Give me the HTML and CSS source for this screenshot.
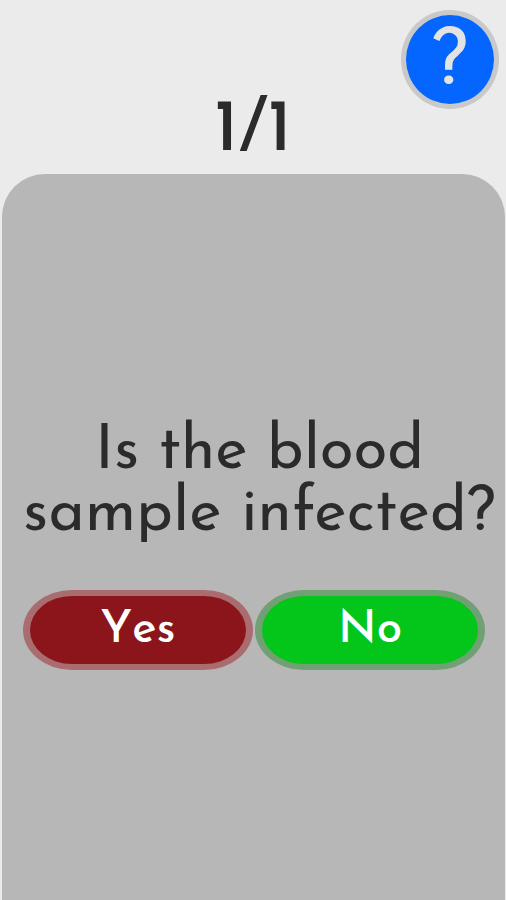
FILE: index.html
```
<!DOCTYPE html>
<html lang="en">
<head>
  <meta charset="UTF-8">
  <meta name="viewport" content="width=device-width, initial-scale=1.0">
  <title>Blood sample</title>
  <link rel="stylesheet" href="styles.css">
</head>
<body>
  <div class="screen">
    <header class="top">
      <div class="counter">1/1</div>
      <button class="help" aria-label="Help"><span>?</span></button>
    </header>

    <main class="card">
      <h1 class="question">
        <span class="line first">Is the blood</span>
        <span class="line second">sample infected?</span>
      </h1>
      <div class="answers">
        <button class="answer yes"><span>Yes</span></button>
        <button class="answer no"><span>No</span></button>
      </div>
    </main>
  </div>
</body>
</html>
```
FILE: styles.css
```
* {
  box-sizing: border-box;
  margin: 0;
  padding: 0;
}
body {
  background-color: #ebebeb;
  color: #2b2b2b;
  font-family: "Josefin Sans", Lato, sans-serif;
}
.screen {
  display: flex;
  flex-direction: column;
  height: 900px;
  overflow: hidden;
}

/* counter and help button */
.top {
  position: relative;
  height: 174px;
  padding-top: 92px;
}
.counter {
  font-size: 74px;
  font-weight: 500;
  line-height: 80px;
  text-align: center;
}
.help {
  position: absolute;
  top: 10px;
  right: 7px;
  width: 98px;
  height: 99px;
  padding-top: 10px;
  border: 5px solid #c9c9c9;
  border-radius: 50%;
  background: #0566ff;
  color: #e3e3e3;
  font-family: inherit;
  font-size: 78px;
  line-height: 80px;
}

/* question card */
.card {
  flex: 1;
  margin: 0 1px 0 2px;
  padding-top: 248px;
  border-radius: 43px 43px 0 0;
  background: #b7b7b7;
}
.question {
  font-size: 62px;
  font-weight: 400;
  line-height: 62px;
  white-space: nowrap;
}
.line {
  display: block;
}
.first {
  padding-left: 93px;
}
.second {
  padding-left: 21px;
  letter-spacing: 0.2px;
}

/* answer buttons */
.answers {
  display: flex;
  gap: 2px;
  margin: 44px 0 0 21px;
}
.answer {
  width: 230px;
  height: 80px;
  padding-top: 2px;
  border: 6px solid;
  border-width: 6px 7px;
  border-radius: 49px / 40px;
  color: #fff;
  font-family: inherit;
  font-size: 46px;
  font-weight: 500;
  line-height: 60px;
}
.yes {
  border-color: #a96c6f;
  background: #8b151a;
  font-kerning: none;
}
.no {
  border-color: #70a073;
  background: #03c51a;
}
```
